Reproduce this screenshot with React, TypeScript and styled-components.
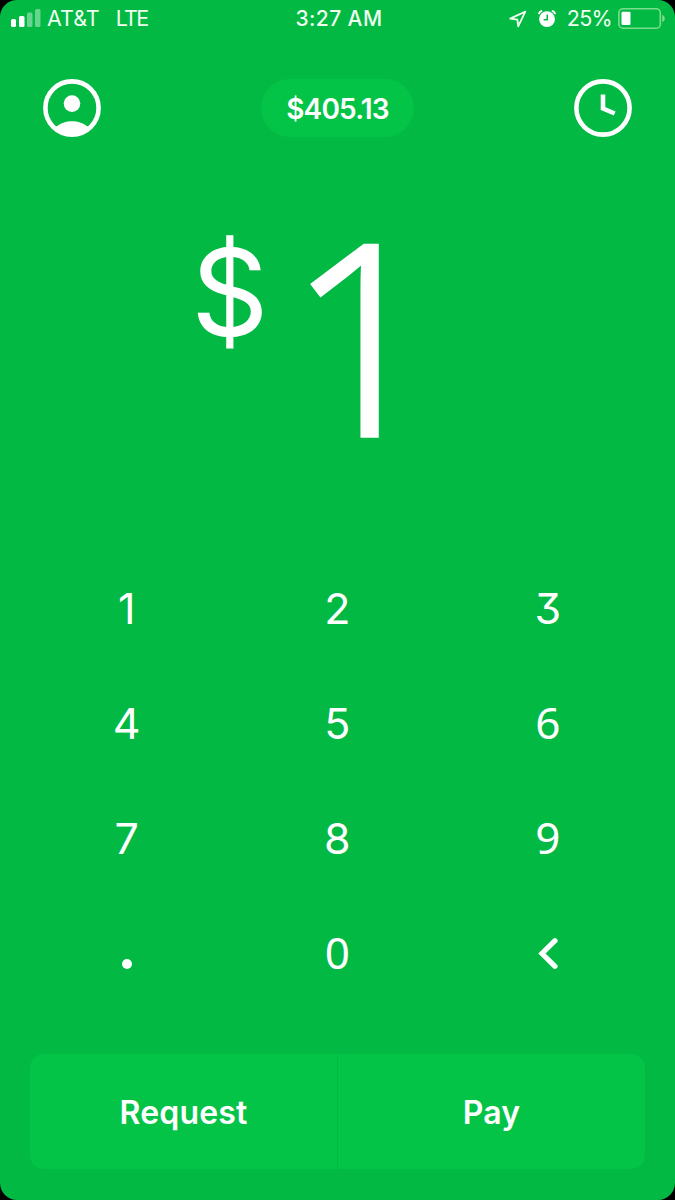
import React from "react";
import styled, { createGlobalStyle } from "styled-components";

const GlobalStyle = createGlobalStyle`
  * { box-sizing: border-box; }
  body {
    margin: 0;
    background: #000;
  }
`;

const Screen = styled.main`
  display: flex;
  flex-direction: column;
  width: 675px;
  height: 1200px;
  overflow: hidden;
  border-radius: 17px;
  background: #02b944;
  color: #fff;
  font-family: Inter, "Liberation Sans", sans-serif;
`;

const StatusBar = styled.div`
  display: grid;
  grid-template-columns: 1fr auto 1fr;
  align-items: center;
  height: 38px;
  padding: 0 10px 0 11px;
  font-size: 21.5px;
  line-height: 36px;
  color: #f0fff0;
`;

const StatusLeft = styled.div`
  display: flex;
  align-items: center;
`;

const StatusRight = styled.div`
  display: flex;
  align-items: center;
  justify-content: flex-end;
  gap: 11px;
`;

const StatusText = styled.span<{ $gap?: number; $spacing?: number }>`
  margin: -2px 0 0 ${(p) => p.$gap ?? 0}px;
  letter-spacing: ${(p) => p.$spacing ?? 0}px;
  font-weight: 380;
  white-space: nowrap;
`;

const BatteryGroup = styled.div`
  display: flex;
  align-items: center;
  gap: 6px;
`;

const Time = styled.span`
  padding-left: 2px;
  font-size: 21px;
  font-weight: 500;
  letter-spacing: 0.4px;
`;

const Header = styled.header`
  display: flex;
  align-items: center;
  justify-content: space-between;
  margin-top: 41px;
  padding: 0 43px;
  height: 58px;
`;

const IconButton = styled.button`
  display: flex;
  padding: 0;
  border: 0;
  background: none;
  color: inherit;
`;

const Balance = styled.button`
  width: 153px;
  height: 58px;
  padding: 2px 0 0;
  border: 0;
  border-radius: 29px;
  background: #04c448;
  color: inherit;
  font: 600 28px/56px Inter, "Liberation Sans", sans-serif;
  letter-spacing: -0.8px;
`;

const Amount = styled.section`
  display: flex;
  align-items: flex-start;
  height: 414px;
  padding: 98px 0 0 191px;
`;

const Currency = styled.span`
  width: 96px;
  padding-top: 8px;
  font-size: 121px;
  line-height: 98px;
`;

const Value = styled.span`
  font-family: "Noto Sans", "Open Sans", sans-serif;
  font-size: 267px;
  font-weight: 300;
  line-height: 195px;
  -webkit-text-stroke: 3.4px #fff;
`;

const Keypad = styled.section`
  display: grid;
  grid-template-columns: repeat(3, 210.5px);
  grid-auto-rows: 115px;
  padding-left: 22px;
`;

const Key = styled.button<{ $narrow?: boolean }>`
  display: flex;
  align-items: center;
  justify-content: center;
  padding: 0 1px ${(p) => (p.$narrow ? 2 : 1)}px 0;
  border: 0;
  background: none;
  color: inherit;
  font: 400 ${(p) => (p.$narrow ? '44px/113px "Noto Sans"' : "43px/114px Inter")}, sans-serif;
  font-feature-settings: "cv09" 1;
`;

const Dot = styled.span`
  width: 10px;
  height: 10px;
  margin: 22px 0 0 1px;
  border-radius: 50%;
  background: #fff;
`;

const Actions = styled.footer`
  display: grid;
  grid-template-columns: 307px 307px;
  gap: 1px;
  height: 115px;
  margin: 43px 30px 0;
  overflow: hidden;
  border-radius: 14px;
  background: #02b944;
`;

const Action = styled.button`
  padding: 2px 0 0;
  border: 0;
  background: #04c448;
  color: inherit;
  font: 600 32px/113px Inter, "Liberation Sans", sans-serif;
  letter-spacing: 0.15px;
`;

const SignalIcon = () => (
  <svg width="30" height="20" viewBox="0 0 30 20" fill="#fff">
    <rect x="0" y="10" width="5" height="8" rx="1.5" />
    <rect x="8" y="7" width="5.5" height="11" rx="1.5" />
    <rect x="16" y="3.5" width="5.5" height="14.5" rx="1.5" opacity=".4" />
    <rect x="24" y="0" width="5.5" height="18" rx="1.5" opacity=".4" />
  </svg>
);

const LocationIcon = () => (
  <svg width="18" height="18" viewBox="0 0 18 18" fill="none" stroke="currentColor" strokeWidth="1.8" strokeLinejoin="round">
    <path d="M1.2 8.6 16.3 1.6 9.2 16.3 8.4 9.6Z" />
  </svg>
);

const AlarmIcon = () => (
  <svg width="18" height="18" viewBox="0 0 18 18" fill="none">
    <circle cx="9" cy="9.2" r="7.9" fill="#fff" />
    <path d="M9.2 4.4v5.4H5.6" stroke="#02b944" strokeWidth="1.5" />
    <path d="M.8 4.2Q1.2 1.4 4.2 .8M17.2 4.2Q16.8 1.4 13.8 .8" stroke="#fff" strokeWidth="1.7" />
  </svg>
);

const BatteryIcon = () => (
  <svg width="47" height="22" viewBox="0 0 47 22" fill="none">
    <rect x=".9" y=".8" width="41.4" height="19.4" rx="4" stroke="#7ade8c" strokeWidth="1.6" />
    <rect x="3.5" y="3.8" width="9" height="13.2" rx="1" fill="#fff" />
    <path d="M44.2 7.1c3.5 1.2 3.5 5.8 0 7Z" fill="#7ade8c" />
  </svg>
);

const ProfileIcon = () => (
  <svg width="58" height="58" viewBox="0 0 58 58" fill="#fff">
    <circle cx="29" cy="29" r="26.6" fill="none" stroke="#fff" strokeWidth="4.6" />
    <circle cx="29" cy="24.6" r="8.3" />
    <path d="M12 48.5C17.5 44 23 42.2 29 42.2S40.5 44 46 48.5C41 54 35 56 29 56S17 54 12 48.5Z" />
  </svg>
);

const ClockIcon = () => (
  <svg width="58" height="58" viewBox="0 0 58 58" fill="none" stroke="#fff" strokeWidth="4.6">
    <circle cx="29" cy="29" r="26.6" />
    <path d="M29 15.5V29.5L40.7 34.5" />
  </svg>
);

const BackIcon = () => (
  <svg width="20" height="32" viewBox="0 0 20 32" fill="none" stroke="#fff" strokeWidth="5.2" strokeLinecap="round">
    <path d="M17 3.7 4 16.5 17 29.3" />
  </svg>
);

const digits = ["1", "2", "3", "4", "5", "6", "7", "8", "9"];
const narrowDigits = ["6", "9"];

export default function App() {
  return (
    <>
      <GlobalStyle />
      <Screen>
        <StatusBar>
          <StatusLeft>
            <SignalIcon />
            <StatusText $gap={6}>AT&amp;T</StatusText>
            <StatusText $gap={16} $spacing={-1.7}>LTE</StatusText>
          </StatusLeft>
          <Time>3:27 AM</Time>
          <StatusRight>
            <LocationIcon />
            <AlarmIcon />
            <BatteryGroup>
              <StatusText $spacing={-0.7}>25%</StatusText>
              <BatteryIcon />
            </BatteryGroup>
          </StatusRight>
        </StatusBar>
        <Header>
          <IconButton aria-label="Profile"><ProfileIcon /></IconButton>
          <Balance>$405.13</Balance>
          <IconButton aria-label="Activity"><ClockIcon /></IconButton>
        </Header>
        <Amount>
          <Currency>$</Currency>
          <Value>1</Value>
        </Amount>
        <Keypad>
          {digits.map((d) => (
            <Key key={d} $narrow={narrowDigits.includes(d)}>{d}</Key>
          ))}
          <Key aria-label="Decimal point"><Dot /></Key>
          <Key $narrow>0</Key>
          <Key aria-label="Delete"><BackIcon /></Key>
        </Keypad>
        <Actions>
          <Action>Request</Action>
          <Action>Pay</Action>
        </Actions>
      </Screen>
    </>
  );
}
